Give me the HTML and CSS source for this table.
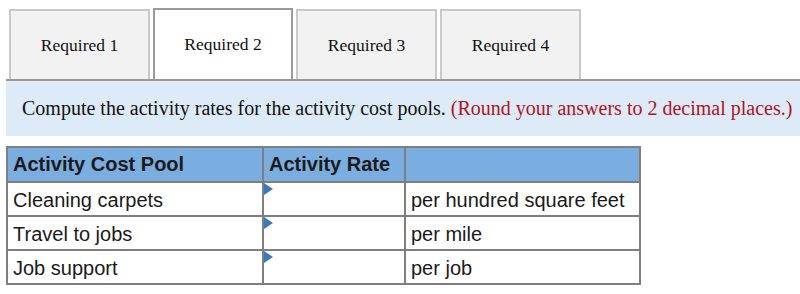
FILE: index.html
```html
<!DOCTYPE html>
<html lang="en">
<head>
    <meta charset="UTF-8">
    <meta name="viewport" content="width=device-width, initial-scale=1.0">
    <title>Activity Rates</title>
    <link rel="stylesheet" href="styles.css">
</head>
<body>
    <div class="tabs">
        <div class="tab">Required 1</div>
        <div class="tab active">Required 2</div>
        <div class="tab">Required 3</div>
        <div class="tab">Required 4</div>
    </div>

    <div class="question">
        Compute the activity rates for the activity cost pools. <span class="hint">(Round your answers to 2 decimal places.)</span>
    </div>

    <table class="rates">
        <tr>
            <th class="col-pool">Activity Cost Pool</th>
            <th class="col-rate">Activity Rate</th>
            <th class="col-unit"></th>
        </tr>
        <tr>
            <td>Cleaning carpets</td>
            <td class="input"><span class="marker"></span></td>
            <td>per hundred square feet</td>
        </tr>
        <tr>
            <td>Travel to jobs</td>
            <td class="input"><span class="marker"></span></td>
            <td>per mile</td>
        </tr>
        <tr>
            <td>Job support</td>
            <td class="input"><span class="marker"></span></td>
            <td>per job</td>
        </tr>
    </table>
</body>
</html>
```

FILE: styles.css
```css
body {
    margin: 0;
    font-family: "Liberation Serif", "Times New Roman", serif;
    background: #fff;
    color: #111;
}
.tabs {
    display: flex;
    align-items: flex-end;
    gap: 3px;
    height: 79px;
    margin-left: 6px;
    padding-left: 3px;
    border-bottom: 2px solid #999;
}
.tab {
    box-sizing: border-box;
    width: 141px;
    height: 70px;
    display: flex;
    justify-content: center;
    align-items: center;
    font-size: 17.5px;
    background: #f2f2f2;
    border: 2px solid #c9c9c9;
    border-bottom: none;
}
.tab.active {
    width: 140px;
    height: 71px;
    background: #fff;
    border-color: #9a9a9a;
}
.question {
    margin-left: 6px;
    height: 55px;
    padding-left: 16px;
    display: flex;
    align-items: center;
    font-size: 20px;
    background: #dcebf7;
}
.hint {
    color: #b5121b;
    margin-left: 5px;
}
.rates {
    margin: 10px 0 0 6px;
    border-collapse: collapse;
    font-family: "Liberation Sans", Arial, sans-serif;
    font-size: 20px;
    color: #1a1a1a;
}
.rates th, .rates td {
    border: 2px solid #7f7f7f;
    height: 33px;
    padding: 0 5px;
    text-align: left;
}
.rates td {
    height: 29px;
    padding-top: 3px;
}
.rates th {
    background: #7aade0;
    font-weight: bold;
}
.col-pool {
    width: 244px;
}
.col-rate {
    width: 130px;
}
.col-unit {
    width: 223px;
}
.rates td.input {
    position: relative;
}
.marker {
    position: absolute;
    left: 0;
    top: 0;
    width: 0;
    height: 0;
    border-top: 6px solid transparent;
    border-bottom: 6px solid transparent;
    border-left: 9px solid #3a78c3;
}
```
